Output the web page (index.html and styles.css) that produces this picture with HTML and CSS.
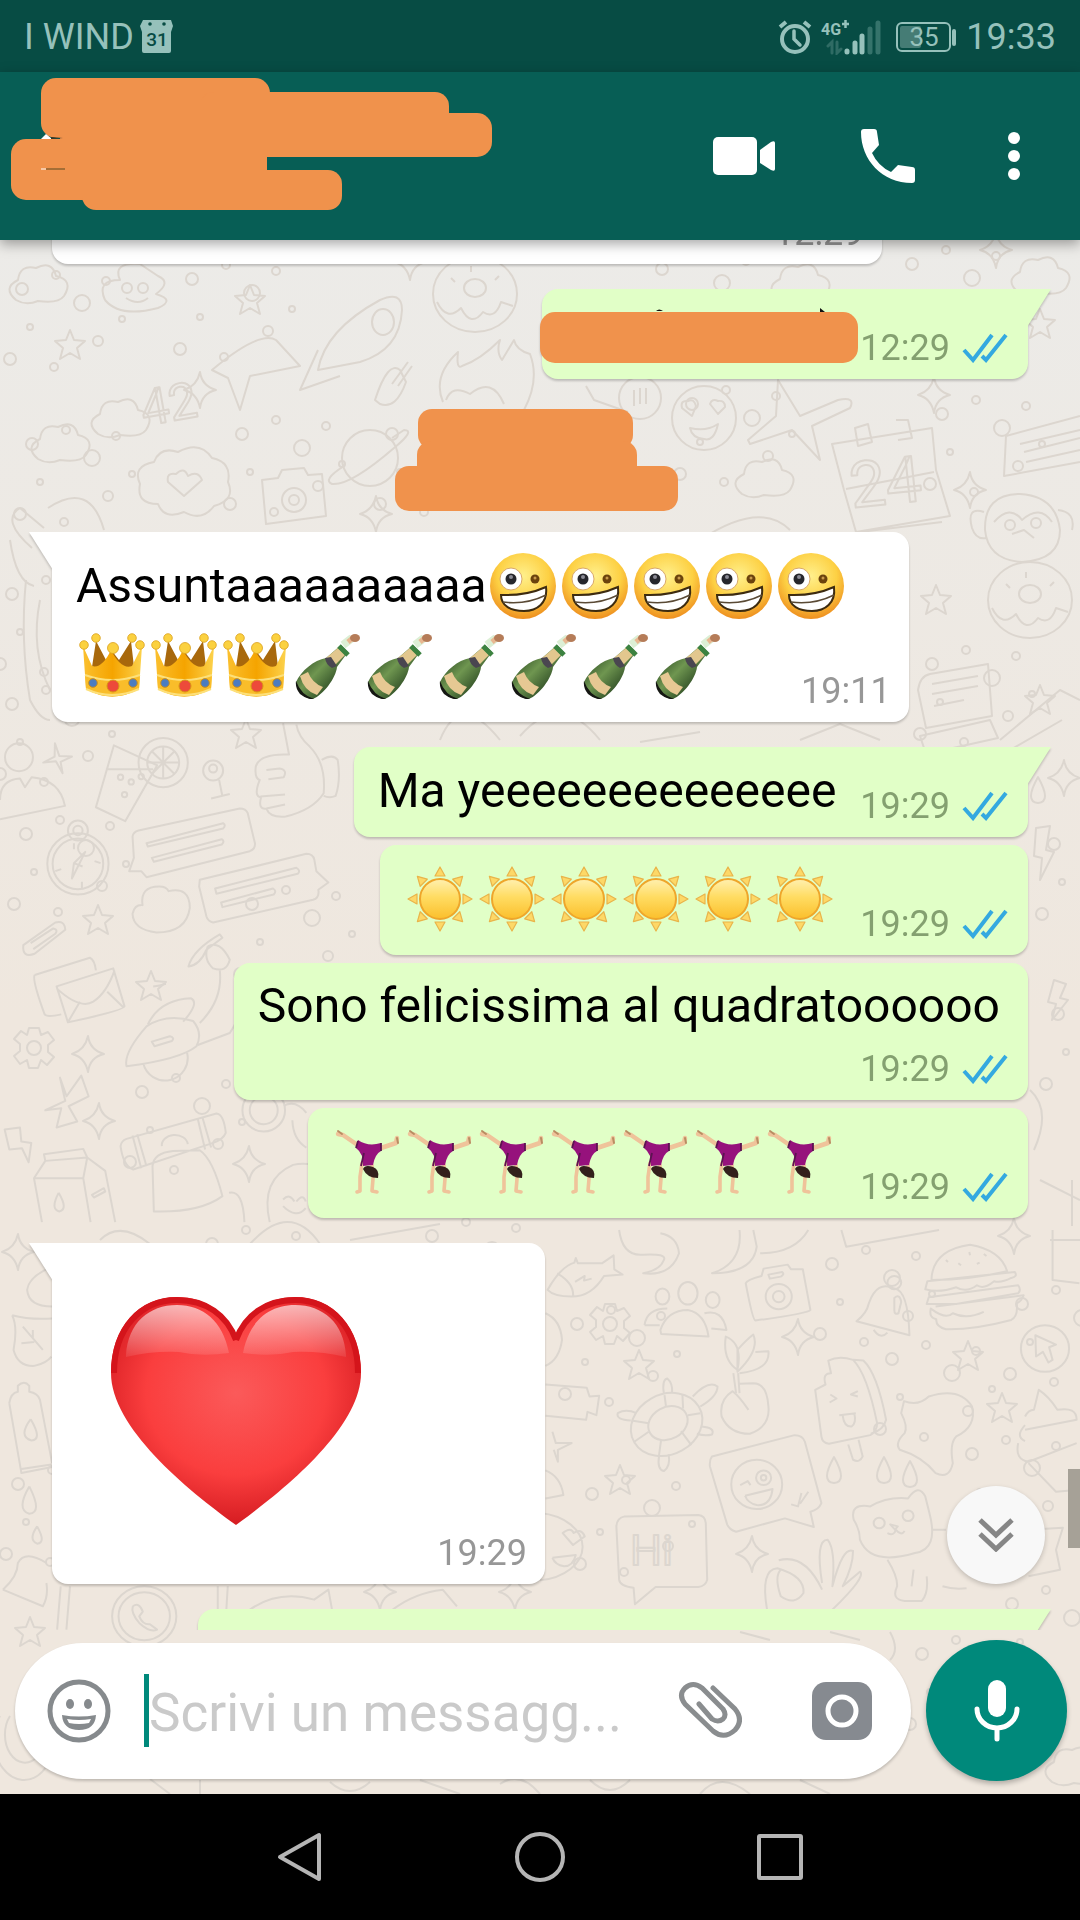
FILE: index.html
```html
<!DOCTYPE html>
<html lang="it">
<head>
    <meta charset="UTF-8">
    <meta name="viewport" content="width=device-width, initial-scale=1.0">
    <title>Chat</title>
    <link rel="stylesheet" href="styles.css">
</head>
<body>

<!-- Shared emoji and icons -->
<svg class="sprites" width="0" height="0" aria-hidden="true">
    <defs>
        <radialGradient id="face" cx="50%" cy="35%" r="65%">
            <stop offset="0" stop-color="#fff08c"/>
            <stop offset="0.6" stop-color="#fdd043"/>
            <stop offset="1" stop-color="#ee8f1f"/>
        </radialGradient>
        <linearGradient id="gold" x1="0" y1="0" x2="1" y2="0">
            <stop offset="0" stop-color="#fbc02f"/>
            <stop offset="0.5" stop-color="#f5a400"/>
            <stop offset="1" stop-color="#fcd24c"/>
        </linearGradient>
        <linearGradient id="glass" x1="0" y1="0" x2="1" y2="1">
            <stop offset="0.1" stop-color="#1f3d1c"/>
            <stop offset="0.45" stop-color="#6f9650"/>
            <stop offset="0.85" stop-color="#1a3518"/>
        </linearGradient>
        <linearGradient id="sunball" x1="0" y1="0" x2="0" y2="1">
            <stop offset="0" stop-color="#fff0b0"/>
            <stop offset="0.45" stop-color="#ffdc62"/>
            <stop offset="1" stop-color="#fbbf2c"/>
        </linearGradient>
        <radialGradient id="heartfill" cx="50%" cy="42%" r="60%">
            <stop offset="0" stop-color="#fb5a5a"/>
            <stop offset="0.6" stop-color="#fa3e3e"/>
            <stop offset="1" stop-color="#d2191f"/>
        </radialGradient>
        <linearGradient id="heartshine" x1="0" y1="0" x2="0" y2="1">
            <stop offset="0" stop-color="#fff" stop-opacity="0.65"/>
            <stop offset="1" stop-color="#fff" stop-opacity="0.08"/>
        </linearGradient>
    </defs>

    <symbol id="zany" viewBox="0 0 66 66">
        <circle cx="33" cy="33" r="33" fill="url(#face)"/>
        <circle cx="21" cy="26" r="11" fill="#fff" stroke="#d9a86a" stroke-width="1"/>
        <circle cx="21" cy="26" r="5.5" fill="#26262c"/>
        <circle cx="21" cy="24" r="2" fill="#8b8b95"/>
        <circle cx="45" cy="26" r="4.5" fill="#6b430d"/>
        <circle cx="45" cy="25" r="1.5" fill="#c99a4a"/>
        <path d="M11 42Q36 43 56 34C58 50 47 58 34 58C21 58 11 53 11 42Z" fill="#fff" stroke="#3d2b10" stroke-width="2"/>
        <path d="M13 49Q36 52 56 42" fill="none" stroke="#5a4a35" stroke-width="1.5"/>
    </symbol>

    <symbol id="crown" viewBox="0 0 66 66">
        <path d="M13 34L17 8L27 27L33 18L40 27L52 8L55 34Z" fill="#a8680c"/>
        <path d="M4 13L13 33Q23 36 32 17Q42 37 53 33L63 13L60 56Q33 71 7 56Z" fill="url(#gold)"/>
        <path d="M6 42Q33 54 61 42L60 56Q33 71 7 56Z" fill="#f9bd2a"/>
        <path d="M6 42Q33 52 61 42M7 56Q33 68 60 56" fill="none" stroke="#fde07a" stroke-width="2"/>
        <g fill="#fbd140" stroke="#dba01c" stroke-width="0.8">
            <circle cx="5" cy="12" r="4.3"/><circle cx="17" cy="5" r="4.3"/><circle cx="53" cy="5" r="4.3"/><circle cx="61" cy="12" r="4.3"/><circle cx="34" cy="15" r="5.5"/>
        </g>
        <circle cx="34" cy="53" r="6" fill="#ed4a3a" stroke="#d99416"/>
        <circle cx="14" cy="50" r="4.3" fill="#4b7cc0" stroke="#c98d1c"/>
        <circle cx="54" cy="50" r="4.3" fill="#4b7cc0" stroke="#c98d1c"/>
    </symbol>

    <symbol id="bottle" viewBox="0 0 66 66">
        <path d="M1 49C6 38 19 27 31 25L46 12L53 19L42 34C41 45 28 62 18 66Q5 66 1 49Z" fill="url(#glass)"/>
        <path d="M1 48Q6 62 19 66Q12 67 5 61Q0 55 1 48Z" fill="#151713"/>
        <path d="M5 43L13 39Q17 50 28 54L22 62Q9 58 5 43Z" fill="#e6c893"/>
        <path d="M31 25L38 34L50 22L43 15Z" fill="#e2c78e"/>
        <path d="M30 25L36 24L42 33L37 35Q31 32 30 25Z" fill="#4a4650"/>
        <path d="M44 13L53 22" stroke="#3c8240" stroke-width="5"/>
        <path d="M48 12L57 5" stroke="#dcefd5" stroke-width="8"/>
        <path d="M53 9L59 4" stroke="#e8b791" stroke-width="5"/>
        <ellipse cx="60" cy="5" rx="5" ry="4" fill="#b57c58"/>
    </symbol>

    <symbol id="sun" viewBox="0 0 66 66">
        <g fill="#fdd867" stroke="#e9b44a" stroke-width="1.2" stroke-linejoin="round">
            <path id="ray" d="M33 1L38 10H28Z"/>
            <use href="#ray" transform="rotate(45 33 33)"/>
            <use href="#ray" transform="rotate(90 33 33)"/>
            <use href="#ray" transform="rotate(135 33 33)"/>
            <use href="#ray" transform="rotate(180 33 33)"/>
            <use href="#ray" transform="rotate(225 33 33)"/>
            <use href="#ray" transform="rotate(270 33 33)"/>
            <use href="#ray" transform="rotate(315 33 33)"/>
        </g>
        <circle cx="33" cy="33" r="20" fill="url(#sunball)" stroke="#eea62b" stroke-width="2"/>
    </symbol>

    <symbol id="cartwheel" viewBox="0 0 66 66">
        <g fill="none" stroke="#efc39a" stroke-linecap="round" stroke-linejoin="round">
            <path d="M3 5L8 6L24 17" stroke-width="4.500"/>
            <path d="M62 9L61 14L43 20" stroke-width="4.500"/>
            <path d="M27 34L25 48L25 62L22 63M37 36L38 50L37 62L42 63" stroke-width="3.600"/>
        </g>
        <path d="M3 2L7 5M62 9L63 14" stroke="#b98d62" stroke-width="2" stroke-linecap="round"/>
        <path d="M23 11Q33 18 46 14L46 22Q40 25 38 36L28 37Q29 25 21 19Z" fill="#96127c"/>
        <path d="M23 12L21 19M46 14L46 22M29 24L26 37" stroke="#5b1450" stroke-width="1.800"/>
        <path d="M28 40Q30 35 38 38Q45 41 43 49Q32 49 28 40Z" fill="#33201c"/>
    </symbol>

    <symbol id="ticks" viewBox="0 0 46 30">
        <path d="M2 17L11 27L30 2M20 23L24 27L44 2" fill="none" stroke="#34a9e0" stroke-width="4"/>
    </symbol>
</svg>

<div class="phone">
    <div class="status-bar">
        <span class="carrier">I WIND</span>
        <svg class="calendar" width="34" height="34" viewBox="0 0 34 34" aria-hidden="true">
            <path d="M3 0H31L33 6L31 12V31Q31 33 29 33H4Q2 33 2 31V12L0 6Z" fill="#96c1bb"/>
            <circle cx="10" cy="4" r="1.800" fill="#074c44"/>
            <circle cx="24" cy="4" r="1.800" fill="#074c44"/>
            <text x="17" y="26" text-anchor="middle" font-size="19" font-weight="500" fill="#074c44">31</text>
        </svg>
        <div class="status-icons">
            <svg width="34" height="36" viewBox="0 0 34 36" fill="none" stroke="#96c1bb" aria-hidden="true">
                <circle cx="17" cy="20" r="13" stroke-width="4"/>
                <path d="M16 12V20L22 26" stroke-width="3.500" stroke-linecap="round"/>
                <path d="M2 8L8 3M26 3L32 8" stroke-width="4"/>
            </svg>
            <svg width="60" height="36" viewBox="0 0 60 36" aria-hidden="true">
                <text x="0" y="16" font-size="16" font-weight="700" fill="#96c1bb">4G</text>
                <path d="M21 5H28M24.500 1V9" stroke="#96c1bb" stroke-width="2.500"/>
                <g fill="none" stroke-linecap="round" stroke-width="5">
                    <path d="M7 27L11 23V34M16 23V34L20 30" stroke="#2f6b64" stroke-width="3"/>
                    <path d="M26 32V33M34 24V33M41 17V33" stroke="#96c1bb"/>
                    <path d="M49 10V33M57 4V33" stroke="#35736b"/>
                </g>
            </svg>
            <svg class="battery" width="61" height="34" viewBox="0 0 61 34" aria-hidden="true">
                <rect x="1" y="3" width="53" height="28" rx="5" fill="none" stroke="#96c1bb" stroke-width="2"/>
                <rect x="4" y="6" width="21" height="22" rx="2" fill="#457c75"/>
                <rect x="56" y="9" width="4" height="17" rx="2" fill="#96c1bb"/>
                <text x="28" y="26" text-anchor="middle" font-size="26" fill="#96c1bb">35</text>
            </svg>
            <span>19:33</span>
        </div>
    </div>

    <header class="chat-header">
        <!-- Contact name is covered -->
        <svg class="contact" width="500" height="168" viewBox="0 72 500 168" aria-hidden="true">
            <g fill="#f0924c">
                <rect x="41" y="78" width="229" height="60" rx="15"/>
                <rect x="200" y="92" width="249" height="65" rx="14"/>
                <rect x="240" y="113" width="252" height="44" rx="15"/>
                <rect x="11" y="139" width="250" height="61" rx="15"/>
                <rect x="82" y="170" width="260" height="40" rx="14"/>
                <path d="M60 100H267V190H60Z"/>
            </g>
            <path d="M41 139L46 134L52 139Z" fill="#fff"/>
            <path d="M51 137L63 138L51 139Z" fill="#3a3524"/>
            <path d="M41 169H46" stroke="#fff"/>
            <path d="M46 169H65" stroke="#5b4a20"/>
        </svg>
        <div class="header-actions">
            <button type="button" aria-label="Videochiamata">
                <svg width="64" height="64" viewBox="0 0 64 64" fill="#fff">
                    <rect x="1" y="13" width="44" height="38" rx="5"/>
                    <path d="M48 26L59 18Q63 16 63 19V45Q63 48 59 46L48 39Z"/>
                </svg>
            </button>
            <button type="button" aria-label="Chiama">
                <svg width="64" height="64" viewBox="0 0 64 64" fill="#fff">
                    <path d="M5 8Q5 5 8 5H18Q21 5 21 8L23 21L16 29Q22 42 35 48L42 41L56 43Q59 43 59 46V56Q59 59 56 59C26 59 5 36 5 8Z"/>
                </svg>
            </button>
            <button type="button" aria-label="Altre opzioni">
                <svg width="64" height="64" viewBox="0 0 64 64" fill="#fff">
                    <circle cx="32" cy="14" r="6"/><circle cx="32" cy="32" r="6"/><circle cx="32" cy="50" r="6"/>
                </svg>
            </button>
        </div>
    </header>

    <main class="chat">
        <!-- Wallpaper doodles -->
        <svg class="wallpaper" viewBox="0 240 1080 1554" preserveAspectRatio="xMidYMid slice" aria-hidden="true">
            <defs>
                <path id="star" d="M0 -15L4 -5L15 -4L7 3L10 14L0 8L-10 14L-7 3L-15 -4L-4 -5Z"/>
                <path id="spark" d="M0 -18Q2 -4 16 0Q2 3 0 18Q-3 3 -16 0Q-3 -4 0 -18Z"/>
                <path id="drop" d="M0 -13Q14 12 0 13Q-14 12 0 -13Z"/>
                <path id="cloud" d="M-22 14Q-36 2 -20 -6Q-18 -22 -2 -18Q14 -26 18 -10Q36 -6 26 10Q20 18 0 15Q-12 20 -22 14Z"/>
                <path id="gear" d="M-5 -20H5L7 -13L14 -16L20 -8L14 -3V4L20 9L13 17L7 12L4 20H-5L-7 12L-14 16L-20 8L-14 3V-4L-20 -9L-13 -17L-7 -13ZM7 0A7 7 0 1 1 -7 0A7 7 0 1 1 7 0"/>
                <path id="camera" d="M-32 -20L-16 -22L-12 -30L10 -32L14 -25L28 -26L32 16L-28 24ZM12 0A12 12 0 1 1 -12 0A12 12 0 1 1 12 0M5 0A5 5 0 1 1 -5 0A5 5 0 1 1 5 0"/>
                <path id="donut" d="M42 0A42 38 0 1 1 -42 0A42 38 0 1 1 42 0M11 -6A11 9 0 1 1 -11 -6A11 9 0 1 1 11 -6M-38 8Q-28 28 -14 14Q-4 34 8 18Q20 26 26 8L38 12M-24 -16L-20 -12M24 -18L20 -14M-4 -28V-22"/>
                <path id="smile" d="M32 0A32 32 0 1 1 -32 0A32 32 0 1 1 32 0M-12 -2L-22 -10Q-24 -18 -16 -17Q-10 -20 -8 -12ZM14 -4L6 -14Q8 -20 14 -17Q21 -18 21 -11ZM-14 10Q2 14 14 6Q10 24 0 21Q-12 20 -14 10Z"/>
                <path id="planet" d="M28 0A28 28 0 1 1 -28 0A28 28 0 1 1 28 0M-26 8Q-48 22 -38 26Q-20 28 24 -10Q46 -28 34 -28L22 -20"/>
                <g id="dots">
                    <circle cx="12" cy="14" r="6"/><circle cx="46" cy="0" r="4"/><circle cx="72" cy="28" r="8"/><circle cx="20" cy="52" r="3"/><circle cx="96" cy="6" r="4"/><circle cx="88" cy="66" r="5"/><circle cx="0" cy="84" r="6"/><circle cx="44" cy="92" r="4"/><circle cx="112" cy="44" r="3"/>
                </g>
            </defs>

            <!-- top band -->
            <use href="#dots" x="10" y="275"/><use href="#dots" x="180" y="265"/><use href="#dots" x="380" y="420"/>
            <use href="#dots" x="230" y="420"/><use href="#dots" x="20" y="430"/><use href="#dots" x="680" y="390"/>
            <use href="#dots" x="900" y="250"/><use href="#dots" x="930" y="400"/><use href="#dots" x="650" y="255"/>
            <use href="#cloud" x="38" y="286"/><use href="#cloud" x="1040" y="278"/><use href="#cloud" x="764" y="480"/>
            <use href="#cloud" x="800" y="285"/><use href="#cloud" x="60" y="445"/><use href="#cloud" x="120" y="420"/>
            <use href="#donut" x="475" y="294"/><use href="#smile" x="704" y="418"/>
            <path d="M105 300Q96 280 120 280Q112 262 140 264L158 276Q172 282 156 294Q176 300 158 308Q120 318 105 300M122 288A5 5 0 1 1 132 288A5 5 0 1 1 122 288M138 288A5 5 0 1 1 148 288A5 5 0 1 1 138 288M126 298Q138 306 148 298"/>
            <path d="M318 370Q325 330 380 300Q402 290 402 310Q400 350 360 362ZM394 322A11 13 0 1 1 372 322A11 13 0 1 1 394 322M318 350L300 390L340 376"/>
            <path d="M212 370Q260 330 276 340L300 366L250 376L240 410L228 378Z"/>
            <path d="M443 402Q432 376 458 352Q456 370 462 366Q480 360 500 340Q496 352 502 360L514 340Q516 350 530 354Q540 380 524 410M446 400Q452 384 470 394Q492 376 504 404"/>
            <path d="M375 400Q388 360 400 370L406 382Q396 410 380 404ZM392 384L408 362M398 386L412 366"/>
            <path d="M748 440L776 416L778 380L800 416L838 400Q856 396 850 408L812 426L820 460L792 430L750 444Z"/>
            <circle cx="640" cy="398" r="21"/>
            <path d="M634 390V406M640 388V404M646 388V404M586 386L594 400L628 412"/>
            <use href="#star" x="1040" y="324"/><use href="#star" x="250" y="300"/><use href="#star" x="70" y="345"/>
            <use href="#spark" x="934" y="395"/><use href="#spark" x="970" y="490"/><use href="#spark" x="376" y="514"/><use href="#spark" x="410" y="262"/><use href="#spark" x="996" y="250"/><use href="#spark" x="200" y="390"/>
            <use href="#planet" x="370" y="458"/>
            <path d="M140 484Q132 466 154 462Q160 446 178 452Q200 440 212 458Q232 462 228 482Q236 500 214 506Q202 522 184 512Q164 520 158 504Q136 504 140 484ZM184 496L168 482Q166 472 176 474Q184 466 188 476Q198 470 202 480Z"/>
            <use href="#camera" x="294" y="500"/>
            <text x="144" y="426" font-size="50" transform="rotate(-10 144 426)">42</text>
            <path d="M832 444L932 428L936 470L950 516L856 532L844 490ZM846 489L934 472M855 428L868 424L872 442L858 446ZM896 420L908 420L912 438L898 440M860 532L942 522"/>
            <text x="852" y="508" font-size="64" transform="rotate(-6 852 508)">24</text>
            <path d="M1006 436L1080 416M1006 436L1004 476L1080 462M1020 444L1080 430M1024 452L1080 438M1026 462L1080 450"/>
            <path d="M985 530Q984 494 1020 494Q1056 496 1060 530Q1060 560 1022 562Q988 560 985 530ZM994 522Q1010 504 1022 520Q1040 504 1052 522M984 512Q966 506 972 528Q976 540 986 538M1058 510Q1076 512 1072 530M1012 534L1024 530L1034 538"/>
            <circle cx="1010" cy="525" r="5"/><circle cx="1036" cy="523" r="5"/>
            <path d="M32 548Q0 520 20 508L44 528M10 540Q16 582 34 586M48 508Q90 480 104 530M560 556L620 538M700 540Q760 500 790 530"/>
            <path d="M26 580Q20 640 30 700Q40 720 50 720M40 600Q30 650 50 690"/>
            <use href="#donut" x="1030" y="600"/><use href="#star" x="936" y="600"/><use href="#dots" x="920" y="650"/>
            <path d="M918 690Q920 676 930 674L988 664L992 716L926 728ZM932 684L978 676M932 694L978 686M934 706L964 700M1000 740L1060 690L1080 700M1010 750L1062 720"/>
            <use href="#dots" x="0" y="580"/><use href="#star" x="1040" y="700"/>
            <path d="M440 740Q460 690 500 740M520 736Q560 690 600 740M640 742L700 732M800 740L840 724L880 740M920 736L990 720L998 738L926 754Z"/>

            <!-- left edge, middle -->
            <g transform="translate(0 700) scale(.333)">
                <circle cx="57" cy="172" r="42"/>
                <path d="M0 358L195 318Q180 240 95 232L75 262L60 236Q0 240 0 300M165 130L178 168L216 170L182 186L188 220L168 184L130 188L164 170Z"/>
                <path d="M342 136L288 322L376 364L472 196ZM318 208H460"/>
                <circle cx="490" cy="188" r="74"/><circle cx="490" cy="188" r="48"/>
                <path d="M490 140V236M442 188H538M456 154L524 222M456 222L524 154M658 240L668 290M634 296L690 282"/>
                <circle cx="640" cy="212" r="30"/><circle cx="640" cy="206" r="12"/><circle cx="362" cy="232" r="8"/><circle cx="394" cy="246" r="8"/><circle cx="424" cy="230" r="8"/><circle cx="374" cy="284" r="8"/>
                <path d="M850 70L868 164Q780 160 768 200Q764 236 780 240Q760 290 784 292Q774 330 800 326Q810 354 858 350Q940 330 972 280Q980 190 930 140Q896 110 890 74M806 238L852 232Q864 210 840 206L800 210M782 290L856 284M800 326L856 314M966 180Q1000 160 1014 180Q1024 240 1008 288Q990 296 972 288"/>
                <circle cx="234" cy="492" r="92"/><circle cx="234" cy="492" r="76"/><circle cx="234" cy="392" r="30"/><circle cx="234" cy="392" r="14"/>
                <path d="M256 456L216 536L222 490ZM222 490L248 500M222 430V448M246 546V566M166 514L184 508M284 484L302 490"/>
                <path d="M398 410Q400 396 416 392L720 326Q738 326 744 340L766 432Q766 448 750 454L440 532L424 514L388 514L402 474ZM440 430L670 370Q680 376 670 386L444 440ZM456 474L666 418Q676 424 666 434L462 486Z"/>
                <path d="M600 540L920 462Q940 462 944 480L950 514L986 548L956 570Q960 594 940 600L640 668Q624 664 620 650L598 560ZM646 566L890 504Q904 512 894 522L650 582ZM664 608L820 566Q832 574 822 584L668 622Z"/>
                <path d="M428 616Q420 560 478 560Q500 560 506 574Q570 560 570 624Q560 698 470 698Q400 690 398 642Q404 614 428 616Z"/>
                <path d="M70 736L166 668Q194 660 196 690L104 762Q66 776 70 736ZM92 730L160 686Q176 690 166 702L100 748"/>
                <path d="M104 826L270 774Q284 780 288 812M104 826Q96 840 134 944Q140 954 184 944M170 860L340 806L374 920Q374 932 204 968ZM170 866Q240 930 280 906Q320 880 344 812M240 906L206 964M322 876L372 924"/>
                <path d="M460 860Q480 858 498 852M380 1100Q370 1060 440 980Q500 940 580 964Q610 1000 590 1040Q540 1080 380 1100ZM444 974Q480 900 574 896Q600 910 550 966M456 1026L510 1010Q526 1014 516 1024L464 1040ZM430 1090A66 66 0 0 0 562 1060M660 812Q670 900 600 970M594 1036L690 1000Q730 940 720 900"/>
                <path d="M566 800Q580 750 660 704L668 714L620 750Q600 796 566 800ZM624 740Q660 720 690 780Q680 820 640 806Q610 780 624 740"/>
                <path d="M180 1134L200 1190L244 1128L266 1190L206 1220L232 1266L170 1284L184 1226L136 1232L196 1204ZM14 1290L60 1284L64 1326L94 1330L86 1388L66 1346L28 1350Z"/>
                <path d="M132 1364L250 1348L262 1374L136 1384ZM136 1384L102 1436L250 1436L262 1374L316 1414L346 1568M102 1436L126 1568M250 1436L272 1568M276 1486L312 1466L316 1476L282 1494ZM176 1480Q206 1530 178 1536Q150 1530 176 1480"/>
                <path d="M362 1340Q364 1324 380 1318L650 1242Q672 1244 678 1300Q670 1320 640 1330L400 1410Q370 1400 362 1340ZM398 1308L424 1406M412 1304L440 1400M594 1258L616 1350M608 1254L634 1344M458 1400Q460 1360 520 1354L600 1352Q640 1380 668 1490Q600 1540 462 1536ZM486 1340A38 30 0 0 1 564 1334M688 1480Q730 1470 734 1568"/>
                <circle cx="792" cy="1232" r="64"/><circle cx="792" cy="1232" r="42"/>
                <path d="M852 1218Q890 1200 920 1240M878 1262Q880 1320 920 1344M810 1568Q780 1440 880 1396Q910 1390 940 1396M850 1500Q870 1480 884 1506M890 1506Q910 1480 918 1506M850 1520Q890 1560 918 1526"/>
            </g>
            <use href="#gear" x="34" y="1048"/><use href="#spark" x="88" y="1054"/><use href="#spark" x="99" y="1121"/><use href="#spark" x="249" y="1164"/>
            <use href="#star" x="98" y="920"/><use href="#star" x="151" y="986"/><use href="#star" x="246" y="734"/>
            <use href="#dots" x="14" y="820"/><use href="#dots" x="130" y="1078"/><use href="#dots" x="240" y="890"/><use href="#dots" x="0" y="690"/>

            <!-- right edge, middle -->
            <use href="#spark" x="1064" y="778"/><use href="#drop" x="1038" y="790"/><use href="#dots" x="1042" y="830"/><use href="#dots" x="1046" y="1000"/>
            <path d="M1036 828L1050 826L1046 850L1054 852L1040 880L1042 858L1034 856ZM1054 980L1066 984L1060 998L1068 1000L1052 1020L1056 1004L1048 1002ZM1030 1090Q1052 1110 1034 1150M1040 1180L1080 1200M1072 1180V1226M1050 1240H1080"/>

            <!-- left edge, bottom -->
            <g transform="translate(0 1230) scale(.357 .333)">
                <path d="M146 110Q80 140 76 180Q80 230 146 230M34 256Q80 270 146 266M34 256Q50 290 38 360Q50 410 96 408Q130 400 144 380M64 290L120 360M92 300V326M60 340L96 336M26 520Q30 490 50 486V468Q68 450 82 468V486Q106 490 112 510L146 700M26 520L60 730L146 712M60 718L144 704M86 568Q120 630 88 632Q50 620 86 568M82 770Q120 850 82 852Q44 840 82 770M104 890Q130 940 104 942Q78 930 104 890M8 1080Q50 1040 50 1000Q70 960 130 1000M8 1080L120 1130Q136 1100 130 1060M170 1070L160 1200M196 1070L186 1200M610 1070V1140M638 1070L634 1140M1100 1140Q1160 1090 1240 1080L1280 1130M700 1140Q780 1080 880 1110L920 1080L930 1140"/>
                <circle cx="404" cy="1160" r="90"/><circle cx="404" cy="1160" r="72"/>
                <path d="M372 1130Q390 1116 400 1146L390 1160Q400 1186 420 1184L440 1200Q420 1210 390 1180Q366 1150 372 1130"/>
            </g>
            <use href="#spark" x="18" y="1252"/><use href="#spark" x="380" y="1592"/><use href="#spark" x="515" y="1592"/><use href="#star" x="30" y="1632"/>
            <use href="#dots" x="6" y="1470"/><use href="#dots" x="200" y="1230"/><use href="#dots" x="420" y="1222"/>
            <path d="M100 1240Q120 1220 150 1244M250 1244Q290 1200 320 1244M350 1240L440 1224M0 1716A30 40 0 1 0 50 1720M10 1716A20 28 0 1 0 42 1720M150 1779L170 1794M200 1780V1794M330 1782Q350 1800 370 1782M420 1780L460 1794M500 1784Q520 1770 540 1794M590 1780Q610 1800 630 1780M700 1794Q720 1770 750 1794M800 1780L830 1794M740 1632L770 1640M830 1632L860 1640M890 1632Q900 1650 890 1660"/>

            <!-- right, bottom -->
            <g transform="translate(540 1230) scale(.344 .333)">
                <path d="M22 180Q60 110 100 98L104 84L110 100H180L214 76L216 118L240 134L186 138Q150 200 92 200Q40 200 22 180ZM50 130Q100 160 96 200M102 156L130 138L128 152L150 146"/>
                <ellipse cx="356" cy="200" rx="20" ry="24"/><ellipse cx="430" cy="190" rx="28" ry="34"/><ellipse cx="502" cy="210" rx="20" ry="24"/>
                <path d="M350 300Q370 240 430 240Q480 250 490 320L352 312ZM304 286Q310 236 370 236M304 286H348M478 250Q530 236 542 300L498 296"/>
                <path d="M598 160Q600 150 644 138L650 116L720 104L730 118H764L786 240Q780 250 626 272Q618 270 598 160ZM664 134L704 126Q712 132 700 140L668 146Z"/>
                <circle cx="694" cy="200" r="38"/><circle cx="694" cy="200" r="17"/>
                <path d="M920 274Q950 250 956 220Q980 150 1030 176Q1070 180 1074 316ZM970 300Q990 330 1010 308M1030 204Q1046 190 1050 216L1042 250Q1030 256 1030 240Z"/><circle cx="1030" cy="158" r="20"/>
                <path d="M1138 150Q1140 60 1250 44Q1340 60 1358 124Q1250 150 1138 150ZM1126 154L1380 126Q1390 140 1370 144Q1340 160 1320 154Q1290 180 1270 166Q1240 190 1210 172Q1160 190 1120 178ZM1130 202L1390 166Q1400 180 1390 190L1210 222L1124 222ZM1150 230L1406 196Q1400 214 1386 220Q1390 260 1370 270Q1260 300 1180 298Q1150 290 1152 268Q1130 264 1136 236Q1180 270 1200 250Q1240 270 1290 246M1180 90L1186 96M1216 100L1224 106M1248 66L1250 76M1270 102L1278 98M1290 72L1298 78"/>
                <path d="M540 320Q590 340 574 420Q530 390 540 320ZM574 360Q600 330 620 314Q640 360 574 426ZM626 366L664 364Q670 420 580 430M562 430L570 490M576 430L580 490M606 540Q580 500 560 484Q520 510 528 560Q550 612 610 612Q670 590 664 530Q660 460 620 460L580 462"/>
                <path d="M838 392Q870 376 910 390Q950 430 980 580Q980 604 960 616L840 642Q820 640 818 620L800 480L830 464Q820 430 846 430ZM910 390L940 392Q980 430 1006 570Q1000 600 962 612M896 644L910 690Q930 700 938 680L926 630M844 494L862 506L842 518M924 484L904 494L924 500M870 556L918 550M880 558Q884 592 906 590Q920 580 914 552"/>
                <path d="M1058 514Q1100 530 1130 500Q1220 470 1256 530Q1270 590 1210 620Q1190 640 1200 700Q1190 750 1150 730Q1110 680 1046 660Q1030 640 1060 610Q1070 590 1050 550Z"/>
                <ellipse cx="372" cy="580" rx="60" ry="48" transform="rotate(-30 372 580)"/><ellipse cx="368" cy="584" rx="108" ry="90" transform="rotate(-30 368 584)"/>
                <path d="M360 490Q354 450 370 446Q386 460 384 488M444 500Q490 450 516 470Q516 500 466 530M264 572Q220 570 226 550Q250 536 280 550M470 590Q510 594 500 614Q480 620 456 612M346 680Q340 720 360 724Q380 710 374 674M362 496L366 528M414 494L416 536M466 550L430 556M440 646L410 604M346 676L352 630M274 636L316 606M266 572L316 580"/>
                <path d="M500 680L740 616Q764 616 770 636L818 820Q810 840 786 846L796 892L712 866L570 906Q550 900 544 884L494 710Q492 690 500 680Z"/>
                <circle cx="630" cy="764" r="74"/><circle cx="650" cy="744" r="22"/><circle cx="650" cy="744" r="8"/>
                <path d="M582 766L604 754L612 766M596 798L676 778Q670 830 630 826Q604 820 596 798M730 824L750 830L760 790M756 822L780 786"/>
                <path d="M246 860L460 856Q480 858 482 880L486 1050Q482 1070 460 1072H336L276 1124L272 1074Q232 1070 230 1050L222 890Q224 864 246 860Z"/>
                <text x="262" y="1006" font-size="130">Hi</text>
                <path d="M0 850A144 102 0 0 1 0 1052M66 910Q90 890 98 910Q120 894 130 920L96 946ZM36 984L104 976Q96 1010 70 1010Q44 1006 36 984M16 250Q60 270 64 330Q56 390 16 408M16 464L136 474L144 500L172 498L164 556L138 546L134 570L16 558M36 606L46 640L92 640L52 660V696L40 660M16 722Q60 740 68 796L16 806"/>
                <path d="M912 870Q900 820 960 830Q1010 800 1070 806Q1100 760 1120 800L1132 850Q1160 960 1090 970Q960 1010 930 930Q930 900 912 870ZM1018 884L1040 890L1032 900ZM1010 910Q1030 920 1034 900Q1050 920 1060 904M1010 990Q1040 1040 1038 1070Q1020 1110 1060 1114H1110Q1130 1090 1124 1040M1080 1070L1086 1020M1140 900H1180M1170 1070Q1200 1080 1240 1076M1420 900L1520 894L1500 960L1512 1020L1420 1040"/>
                <circle cx="986" cy="880" r="16"/><circle cx="1070" cy="858" r="16"/>
                <path d="M694 992Q770 970 820 1080M820 1060Q800 930 836 930Q860 960 850 1070Q880 950 910 964Q910 1010 880 1070L930 1026Q950 1040 850 1140M660 1140Q640 1020 690 1016Q770 1040 766 1090Q740 1130 700 1100Q680 1040 700 1020"/>
                <circle cx="1468" cy="356" r="70"/>
                <path d="M1440 316L1500 344L1480 352L1490 390L1478 398L1462 366L1442 380ZM1410 560Q1420 540 1436 540L1450 480Q1480 500 1504 540Q1560 530 1560 570L1410 600M1410 586Q1380 620 1410 634M1390 640Q1380 690 1420 696L1560 640M1420 700L1500 786L1568 780M876 0L890 50L1160 0M1490 0V150L1568 160M230 0Q240 80 300 74Q370 70 360 90Q350 120 300 130Q380 140 404 70Q400 20 350 10M580 0Q590 100 500 130Q620 130 630 50L620 0M640 70Q740 70 780 0"/>
            </g>
            <use href="#gear" x="610" y="1324"/><use href="#spark" x="798" y="1337"/><use href="#spark" x="752" y="1554"/><use href="#spark" x="1014" y="1236"/>
            <use href="#star" x="639" y="1365"/><use href="#star" x="968" y="1356"/><use href="#star" x="1002" y="1408"/><use href="#star" x="620" y="1480"/>
            <use href="#drop" x="834" y="1470"/><use href="#drop" x="884" y="1470"/><use href="#drop" x="910" y="1474"/>
            <use href="#dots" x="820" y="1250"/><use href="#dots" x="565" y="1310"/><use href="#dots" x="880" y="1345"/><use href="#dots" x="580" y="1480"/><use href="#dots" x="960" y="1440"/><use href="#dots" x="1010" y="1290"/><use href="#dots" x="910" y="1640"/><use href="#dots" x="1000" y="1590"/>
            <use href="#cloud" x="1074" y="1768"/>
        </svg>

        <div class="messages">
            <div class="message in cut wide">
                <span class="meta"><time>12:29</time></span>
            </div>

            <div class="message out first">
                <svg class="covered" width="318" height="55" viewBox="0 0 318 55" aria-hidden="true">
                    <path d="M116 3Q119 0 123 3ZM280 0L285 4H280Z" fill="#111"/>
                    <rect x="0" y="4" width="318" height="51" rx="15" fill="#f0924c"/>
                </svg>
                <span class="meta"><time>12:29</time><svg width="46" height="30"><use href="#ticks"/></svg></span>
            </div>

            <svg class="day" width="290" height="102" viewBox="0 0 290 102" fill="#f0924c" aria-hidden="true">
                <rect x="23" y="0" width="215" height="40" rx="14"/>
                <rect x="22" y="32" width="220" height="50" rx="14"/>
                <rect x="0" y="57" width="283" height="45" rx="14"/>
            </svg>

            <div class="message in overlap">
                <div class="text pad">Assuntaaaaaaaaaa<svg class="emoji"><use href="#zany"/></svg><svg class="emoji"><use href="#zany"/></svg><svg class="emoji"><use href="#zany"/></svg><svg class="emoji"><use href="#zany"/></svg><svg class="emoji"><use href="#zany"/></svg><br><svg class="emoji"><use href="#crown"/></svg><svg class="emoji"><use href="#crown"/></svg><svg class="emoji"><use href="#crown"/></svg><svg class="emoji"><use href="#bottle"/></svg><svg class="emoji"><use href="#bottle"/></svg><svg class="emoji"><use href="#bottle"/></svg><svg class="emoji"><use href="#bottle"/></svg><svg class="emoji"><use href="#bottle"/></svg><svg class="emoji"><use href="#bottle"/></svg></div>
                <span class="meta"><time>19:11</time></span>
            </div>

            <div class="message out first">
                <div class="text">Ma yeeeeeeeeeeeeee</div>
                <span class="meta"><time>19:29</time><svg width="46" height="30"><use href="#ticks"/></svg></span>
            </div>

            <div class="message out">
                <div class="text"><svg class="emoji"><use href="#sun"/></svg><svg class="emoji"><use href="#sun"/></svg><svg class="emoji"><use href="#sun"/></svg><svg class="emoji"><use href="#sun"/></svg><svg class="emoji"><use href="#sun"/></svg><svg class="emoji"><use href="#sun"/></svg></div>
                <span class="meta"><time>19:29</time><svg width="46" height="30"><use href="#ticks"/></svg></span>
            </div>

            <div class="message out stacked">
                <div class="text">Sono felicissima al quadratoooooo</div>
                <span class="meta"><time>19:29</time><svg width="46" height="30"><use href="#ticks"/></svg></span>
            </div>

            <div class="message out">
                <div class="text"><svg class="emoji"><use href="#cartwheel"/></svg><svg class="emoji"><use href="#cartwheel"/></svg><svg class="emoji"><use href="#cartwheel"/></svg><svg class="emoji"><use href="#cartwheel"/></svg><svg class="emoji"><use href="#cartwheel"/></svg><svg class="emoji"><use href="#cartwheel"/></svg><svg class="emoji"><use href="#cartwheel"/></svg></div>
                <span class="meta"><time>19:29</time><svg width="46" height="30"><use href="#ticks"/></svg></span>
            </div>

            <div class="message in first overlap">
                <svg class="heart" width="250" height="228" viewBox="0 0 250 228" role="img" aria-label="Cuore">
                    <path d="M125 228C75 192 0 130 0 76C0 30 28 0 66 0C94 0 116 16 125 38C134 16 156 0 184 0C222 0 250 30 250 76C250 130 175 192 125 228Z" fill="url(#heartfill)"/>
                    <path d="M125 43C116 18 95 3 66 3C30 3 3 31 3 76M125 43C134 18 155 3 184 3C220 3 247 31 247 76" fill="none" stroke="#d4141b" stroke-width="6"/>
                    <path d="M15 58C17 26 38 8 66 8C92 8 112 24 118 56Q90 60 68 55Q40 54 15 60ZM235 58C233 26 212 8 184 8C158 8 138 24 132 56Q160 60 182 55Q210 54 235 60Z" fill="url(#heartshine)"/>
                </svg>
                <span class="meta"><time>19:29</time></span>
            </div>

            <div class="message out first wide"></div>
        </div>

        <div class="scroll-thumb"></div>
        <button type="button" class="scroll-down" aria-label="Vai in fondo">
            <svg width="36" height="34" viewBox="0 0 36 34" fill="none" stroke="#868686" stroke-width="5">
                <path d="M2 2L18 17L34 2M2 16L18 31L34 16"/>
            </svg>
        </button>

        <form class="composer">
            <div class="input-box">
                <button type="button" aria-label="Emoji">
                    <svg width="64" height="64" viewBox="0 0 64 64">
                        <circle cx="32" cy="32" r="29" fill="none" stroke="#868a8d" stroke-width="5"/>
                        <ellipse cx="23" cy="25" rx="4" ry="5" fill="#868a8d"/>
                        <ellipse cx="41" cy="25" rx="4" ry="5" fill="#868a8d"/>
                        <path d="M15 36Q32 39 49 36Q48 51 32 51Q16 51 15 36Z" fill="#868a8d"/>
                        <path d="M20 40Q32 42 44 40L42 44Q32 46 22 44Z" fill="#fff"/>
                    </svg>
                </button>
                <input type="text" placeholder="Scrivi un messagg..." aria-label="Scrivi un messaggio">
                <button type="button" aria-label="Allega">
                    <svg width="64" height="64" viewBox="0 0 64 64" fill="none" stroke="#8a8d8f" stroke-width="5" stroke-linecap="round">
                        <path d="M35 9L57 30Q66 41 57 51Q46 61 35 52L7 25Q0 16 7 9Q15 2 24 9L45 30Q49 36 45 40Q40 44 34 40L21 25"/>
                    </svg>
                </button>
                <button type="button" aria-label="Fotocamera">
                    <svg width="64" height="64" viewBox="0 0 64 64">
                        <rect x="2" y="3" width="60" height="58" rx="14" fill="#868a90"/>
                        <circle cx="32" cy="32" r="14" fill="none" stroke="#fff" stroke-width="5"/>
                    </svg>
                </button>
            </div>
            <button type="button" class="mic" aria-label="Messaggio vocale">
                <svg width="64" height="64" viewBox="0 0 64 64">
                    <rect x="23" y="1" width="18" height="37" rx="9" fill="#fff"/>
                    <path d="M12 30A20 19 0 0 0 52 30M32 49V60" fill="none" stroke="#fff" stroke-width="5" stroke-linecap="round"/>
                </svg>
            </button>
        </form>
    </main>

    <nav class="nav-bar">
        <button type="button" aria-label="Indietro">
            <svg width="52" height="52" viewBox="0 0 52 52"><path d="M45 4V48L6 26Z"/></svg>
        </button>
        <button type="button" aria-label="Home">
            <svg width="52" height="52" viewBox="0 0 52 52"><circle cx="26" cy="26" r="23"/></svg>
        </button>
        <button type="button" aria-label="Recenti">
            <svg width="52" height="52" viewBox="0 0 52 52"><rect x="5" y="5" width="42" height="42" rx="1"/></svg>
        </button>
    </nav>
</div>

</body>
</html>
```
FILE: styles.css
```css
* {
    box-sizing: border-box;
}

body {
    margin: 0;
    font-family: Roboto, "Liberation Sans", sans-serif;
    color: #000;
}

button {
    display: flex;
    align-items: center;
    justify-content: center;
    padding: 0;
    border: none;
    background: none;
    cursor: pointer;
}

svg {
    display: block;
    flex-shrink: 0;
}

.sprites {
    position: absolute;
}

.phone {
    display: flex;
    flex-direction: column;
    height: 100vh;
}

/* Status bar */
.status-bar {
    display: flex;
    align-items: center;
    height: 72px;
    padding: 2px 24px 0 24px;
    background-color: #074c44;
    color: #96c1bb;
    font-size: 36px;
    line-height: 42px;
}

.calendar {
    margin-left: 6px;
}

.status-icons {
    display: flex;
    align-items: center;
    gap: 9px;
    margin-left: auto;
}

.battery {
    margin-left: 6px;
}

/* Header */
.chat-header {
    display: flex;
    align-items: center;
    justify-content: space-between;
    height: 168px;
    padding-right: 34px;
    background-color: #075e55;
    box-shadow: 0 4px 12px rgba(0, 0, 0, 0.35);
    z-index: 2;
}

.header-actions {
    display: flex;
}

.header-actions button {
    width: 64px;
    height: 96px;
    margin-left: 62px;
}

.header-actions button:nth-child(2) {
    margin-left: 80px;
}

/* Chat area */
.chat {
    position: relative;
    display: flex;
    flex-direction: column;
    flex: 1;
    min-height: 0;
    background: linear-gradient(#ecebe8, #efe7de 50%);
}

.wallpaper {
    position: absolute;
    inset: 0;
    width: 100%;
    height: 100%;
    fill: none;
    stroke: #dcd6cf;
    stroke-width: 2;
    stroke-linejoin: round;
}

.wallpaper path,
.wallpaper circle,
.wallpaper ellipse,
.wallpaper text {
    vector-effect: non-scaling-stroke;
}

.messages {
    position: relative;
    display: flex;
    flex-direction: column;
    align-items: flex-start;
    gap: 8px;
    flex: 1;
    min-height: 0;
    padding: 0 52px;
    overflow: hidden;
}

.message {
    position: relative;
    display: flex;
    align-items: flex-end;
    gap: 24px;
    flex-shrink: 0;
    padding: 14px 20px 10px 24px;
    border-radius: 16px;
    background-color: #fff;
    filter: drop-shadow(0 2px 1px rgba(0, 0, 0, 0.2));
}

.message.in {
    padding-right: 18px;
}

.message.out {
    align-self: flex-end;
    background-color: #e1ffc7;
}

.message.first {
    margin-top: 17px;
}

/* Tail on the first bubble of a group */
.message.in:not(.cut)::before,
.message.out.first::before {
    content: "";
    position: absolute;
    top: 0;
    width: 24px;
    height: 38px;
    background-color: inherit;
}

.message.in:not(.cut)::before {
    right: 100%;
    margin-right: -1px;
    clip-path: polygon(0 0, 100% 0, 100% 100%);
}

.message.out.first::before {
    left: 100%;
    margin-left: -1px;
    clip-path: polygon(0 0, 100% 0, 0 100%);
}

.message.in:not(.cut) {
    border-top-left-radius: 0;
}

.message.out.first {
    border-top-right-radius: 0;
}

.message.wide {
    width: 85%;
    min-height: 90px;
}

.message.cut {
    justify-content: flex-end;
    margin-top: -66px;
}

.message.stacked {
    flex-direction: column;
    gap: 6px;
    padding-top: 13px;
}

.message.stacked .text {
    padding-right: 8px;
}

/* Time sits in the corner, under the end of the content */
.message.overlap {
    display: grid;
}

.message.overlap > * {
    grid-area: 1 / 1;
}

.message.overlap .meta {
    align-self: end;
    justify-self: end;
}

.text {
    font-size: 48px;
    line-height: 60px;
    margin-bottom: 6px;
    white-space: nowrap;
}

.text.pad {
    padding-right: 44px;
}

.emoji {
    display: inline-block;
    width: 66px;
    height: 66px;
    margin: 7px 3px;
    vertical-align: -24px;
}

.heart {
    margin: 40px 166px 49px 35px;
}

.covered {
    margin: 5px -22px 6px -26px;
}

.day {
    align-self: center;
    margin: 22px 0 13px;
}

.meta {
    display: flex;
    align-items: center;
    gap: 12px;
    color: #979797;
    font-size: 36px;
    line-height: 42px;
}

.message.out .meta {
    color: #84a070;
}

.scroll-thumb {
    position: absolute;
    right: 0;
    bottom: 246px;
    width: 12px;
    height: 79px;
    background-color: #a6a197;
}

.scroll-down {
    position: absolute;
    right: 35px;
    bottom: 210px;
    width: 98px;
    height: 98px;
    border-radius: 50%;
    background-color: #f8f8f8;
    box-shadow: 0 2px 5px rgba(0, 0, 0, 0.2);
}

/* Composer */
.composer {
    position: relative;
    display: flex;
    align-items: center;
    gap: 15px;
    padding: 10px 13px 13px 15px;
}

.input-box {
    display: flex;
    align-items: center;
    flex: 1;
    min-width: 0;
    height: 136px;
    padding: 0 37px 0 32px;
    border-radius: 68px;
    background-color: #fff;
    box-shadow: 0 2px 3px rgba(0, 0, 0, 0.2);
}

.input-box input {
    flex: 1;
    min-width: 0;
    height: 73px;
    margin: 0 20px 0 33px;
    padding: 4px 0 0;
    border: none;
    border-left: 5px solid #00897b;
    background: none;
    font-family: inherit;
    font-size: 53px;
    outline: none;
}

.input-box input::placeholder {
    color: #cacaca;
    opacity: 1;
}

.input-box button:last-child {
    margin-left: 68px;
}

.mic {
    width: 141px;
    height: 141px;
    border-radius: 50%;
    background-color: #00897b;
    box-shadow: 0 3px 5px rgba(0, 0, 0, 0.25);
}

/* Android navigation */
.nav-bar {
    display: flex;
    align-items: center;
    justify-content: center;
    gap: 188px;
    height: 126px;
    background-color: #000;
}

.nav-bar svg {
    fill: none;
    stroke: #b5b5b5;
    stroke-width: 4;
    stroke-linejoin: round;
}
```
